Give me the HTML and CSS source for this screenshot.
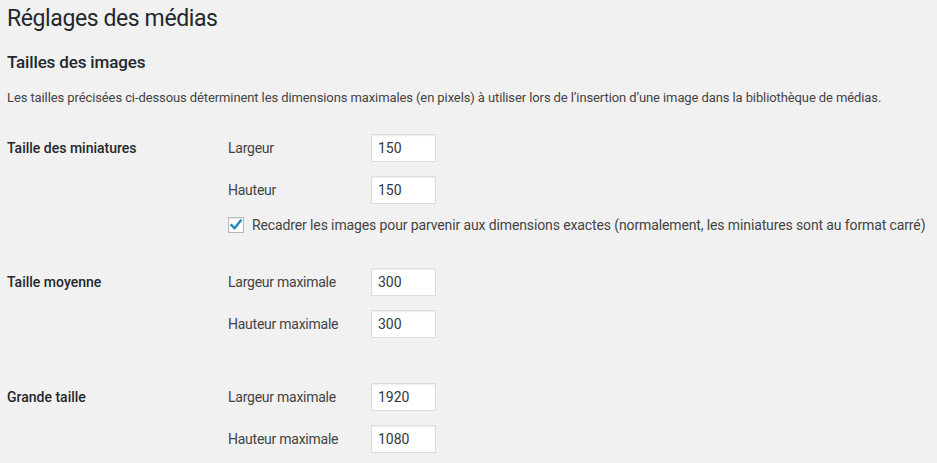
FILE: index.html
```html
<!DOCTYPE html>
<html lang="fr">
<head>
  <meta charset="UTF-8">
  <title>Réglages des médias</title>
  <meta name="viewport" content="width=device-width, initial-scale=1.0">
  <link rel="stylesheet" href="styles.css">
</head>
<body>

  <div class="wrap">
    <h1>Réglages des médias</h1>

    <h2>Tailles des images</h2>
    <p class="intro">Les tailles précisées ci-dessous déterminent les dimensions maximales (en pixels) à utiliser lors de l’insertion d’une image dans la bibliothèque de médias.</p>

    <div class="size-row">
      <div class="size-name">Taille des miniatures</div>
      <div class="size-fields">
        <div class="field">
          <label for="thumbW">Largeur</label>
          <input type="text" id="thumbW" class="small-text" value="150">
        </div>
        <div class="field">
          <label for="thumbH">Hauteur</label>
          <input type="text" id="thumbH" class="small-text" value="150">
        </div>
        <label class="crop">
          <span class="checkbox">
            <svg viewBox="0 0 16 16" width="16" height="16"><path d="M3.5 8.2 L6.6 11.2 L12.6 3.6" fill="none" stroke="#1e8cbe" stroke-width="2.4" stroke-linecap="square"/></svg>
          </span>
          Recadrer les images pour parvenir aux dimensions exactes (normalement, les miniatures sont au format carré)
        </label>
      </div>
    </div>

    <div class="size-row medium">
      <div class="size-name">Taille moyenne</div>
      <div class="size-fields">
        <div class="field">
          <label for="mediumW">Largeur maximale</label>
          <input type="text" id="mediumW" class="small-text" value="300">
        </div>
        <div class="field">
          <label for="mediumH">Hauteur maximale</label>
          <input type="text" id="mediumH" class="small-text" value="300">
        </div>
      </div>
    </div>

    <div class="size-row">
      <div class="size-name">Grande taille</div>
      <div class="size-fields">
        <div class="field">
          <label for="largeW">Largeur maximale</label>
          <input type="text" id="largeW" class="small-text" value="1920">
        </div>
        <div class="field">
          <label for="largeH">Hauteur maximale</label>
          <input type="text" id="largeH" class="small-text" value="1080">
        </div>
      </div>
    </div>
  </div>

</body>
</html>
```

FILE: styles.css
```css
body {
  margin: 0;
  background: #f1f1f1;
  color: #444;
  font-family: Roboto, sans-serif;
  font-size: 13px;
}

.wrap {
  padding: 0 0 0 7px;
}

h1 {
  margin: 0;
  padding: 4px 0 0;
  font-size: 23px;
  font-weight: 400;
  line-height: 29px;
  letter-spacing: -0.4px;
  color: #23282d;
}

h2 {
  margin: 17px 0 0;
  font-size: 17px;
  font-weight: 500;
  line-height: 24px;
  letter-spacing: -0.15px;
  color: #23282d;
}

.intro {
  margin: 14px 0 0;
  line-height: 20px;
  letter-spacing: -0.1px;
}

.size-row {
  display: grid;
  grid-template-columns: 221px 1fr;
  padding-top: 26px;
}

.size-row.medium {
  padding-top: 33px;
  padding-bottom: 19px;
}

.size-name {
  font-size: 14px;
  font-weight: 500;
  color: #23282d;
  line-height: 28px;
}

.size-fields {
  display: flex;
  flex-direction: column;
  gap: 14px;
}

.field {
  display: flex;
  align-items: center;
  font-size: 14px;
  letter-spacing: -0.25px;
}

.field label {
  width: 143px;
}

.small-text {
  box-sizing: border-box;
  width: 65px;
  height: 28px;
  padding: 3px 6px;
  border: 1px solid #ddd;
  box-shadow: inset 0 1px 2px rgba(0, 0, 0, 0.07);
  background: #fff;
  color: #32373c;
  font-family: inherit;
  font-size: 14px;
  letter-spacing: 0;
  outline: none;
}

.crop {
  display: flex;
  align-items: center;
  gap: 8px;
  margin-top: -3px;
  font-size: 14px;
  line-height: 20px;
  letter-spacing: -0.12px;
  white-space: nowrap;
}

.checkbox {
  box-sizing: border-box;
  flex: none;
  width: 16px;
  height: 16px;
  border: 1px solid #b4b9be;
  background: #fff;
  box-shadow: inset 0 1px 2px rgba(0, 0, 0, 0.1);
  display: flex;
  align-items: center;
  justify-content: center;
}

.checkbox svg {
  flex: none;
}
```
